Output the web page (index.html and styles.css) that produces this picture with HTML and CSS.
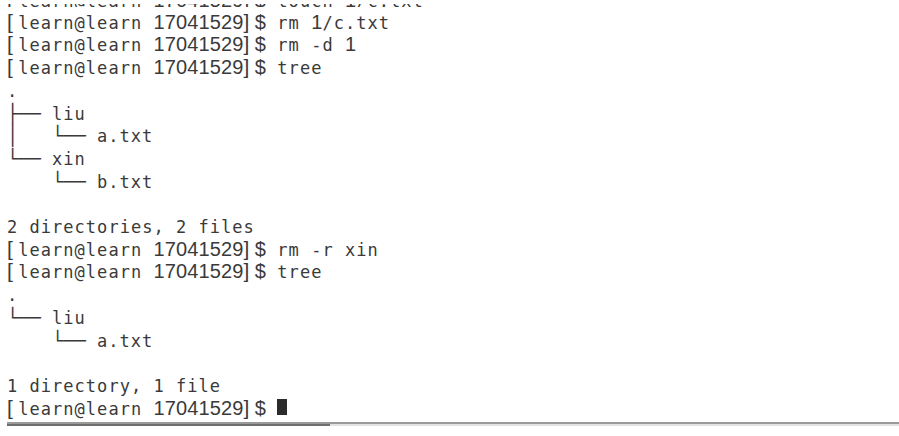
FILE: index.html
```html
<!DOCTYPE html>
<html>
<head>
<meta charset="utf-8">
<link rel="stylesheet" href="styles.css">
</head>
<body>
<div class="terminal">
<div class="prev"><div class="prev-line"><span class="br">[</span>learn@learn <span class="nm">17041529</span><span class="br">]</span><span class="nm">$</span> touch <span class="nm">1</span>/c.txt</div></div>
<pre class="screen"><span class="br">[</span>learn@learn <span class="nm">17041529</span><span class="br">]</span><span class="nm">$</span> rm <span class="nm">1</span>/c.txt
<span class="br">[</span>learn@learn <span class="nm">17041529</span><span class="br">]</span><span class="nm">$</span> rm -d <span class="nm">1</span>
<span class="br">[</span>learn@learn <span class="nm">17041529</span><span class="br">]</span><span class="nm">$</span> tree
.
<span class="box">├── </span>liu
<span class="box">│   └── </span>a.txt
<span class="box">└── </span>xin
<span class="box">    └── </span>b.txt

2 directories, 2 files
<span class="br">[</span>learn@learn <span class="nm">17041529</span><span class="br">]</span><span class="nm">$</span> rm -r xin
<span class="br">[</span>learn@learn <span class="nm">17041529</span><span class="br">]</span><span class="nm">$</span> tree
.
<span class="box">└── </span>liu
<span class="box">    └── </span>a.txt

1 directory, 1 file
<span class="br">[</span>learn@learn <span class="nm">17041529</span><span class="br">]</span><span class="nm">$</span> <span class="cursor"></span></pre>
<div class="scrollbar"><div class="thumb"></div></div>
</div>
</body>
</html>
```
FILE: styles.css
```css
html, body {
  margin: 0;
  padding: 0;
  background: #ffffff;
  overflow: hidden;
}
.terminal {
  width: 899px;
  height: 436px;
  overflow: hidden;
  display: flex;
  flex-direction: column;
  font-family: "DejaVu Sans Mono", monospace;
  font-size: 17px;
  letter-spacing: 1.03px;
  color: #3a3a3a;
}
.prev {
  margin-top: 4px;
  height: 3px;
  overflow: hidden;
  padding-left: 7px;
  flex: none;
}
.prev-line {
  margin-top: -14.25px;
  line-height: 22.7px;
  white-space: pre;
}
.screen {
  margin: 4.75px 0 0 0;
  padding: 0 0 0 7px;
  font: inherit;
  line-height: 22.7px;
  white-space: pre;
  flex: none;
}
.br {
  font-family: "Liberation Sans", Arial, sans-serif;
  font-size: 21px;
  letter-spacing: 5.42px;
  line-height: 1px;
}
.nm {
  font-family: "Liberation Sans", Arial, sans-serif;
  font-size: 20px;
  letter-spacing: 0.14px;
  line-height: 1px;
}
.box {
  font-size: 18.7px;
  letter-spacing: 0;
  line-height: 1px;
}
.cursor {
  display: inline-block;
  width: 10px;
  height: 16px;
  background: #2b2b2b;
}
.scrollbar {
  margin: 1.6px 0 0 7px;
  border-top: 2px solid #9a9a9a;
  height: 2px;
  background: #e2e2e2;
  flex: none;
}
.thumb {
  width: 323px;
  height: 2px;
  background: #6e6e6e;
}
```
